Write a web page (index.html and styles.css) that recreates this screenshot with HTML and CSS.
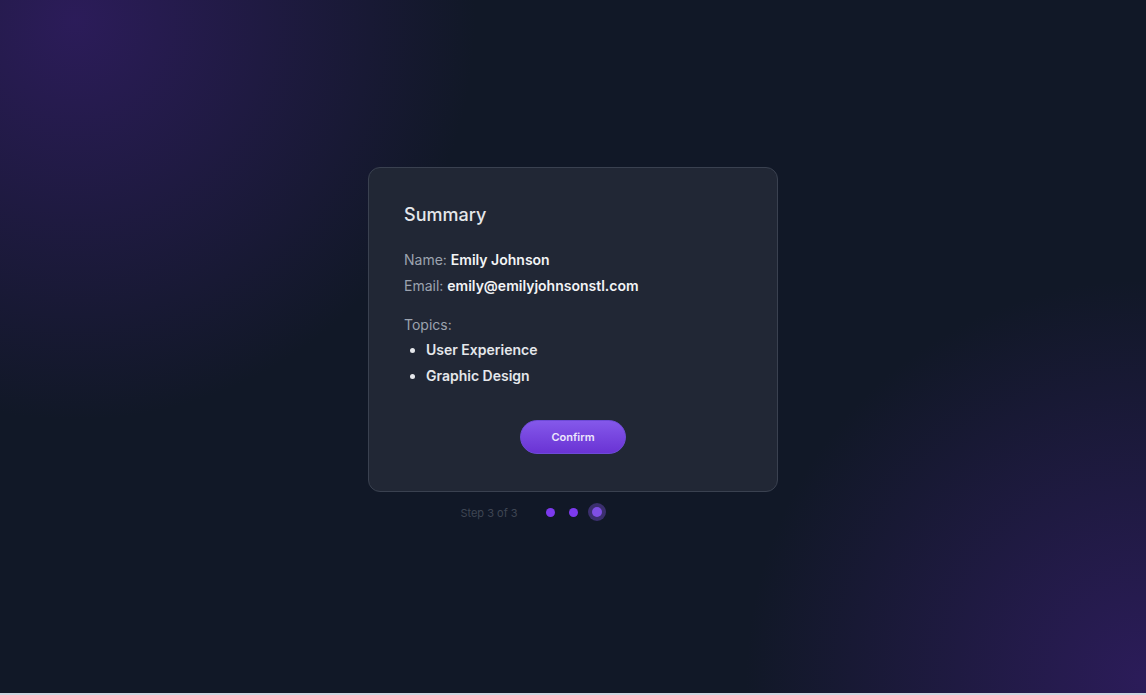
FILE: index.html
```html
<!DOCTYPE html>
<html lang="en">
<head>
<meta charset="utf-8">
<title>Summary</title>
<link rel="stylesheet" href="styles.css">
</head>
<body>
<main class="page">
  <div class="wizard">
    <section class="card">
      <h2 class="title">Summary</h2>
      <div class="fields">
        <p class="field"><span class="label">Name:</span> <strong>Emily Johnson</strong></p>
        <p class="field"><span class="label">Email:</span> <strong>emily@emilyjohnsonstl.com</strong></p>
      </div>
      <p class="label topics-label">Topics:</p>
      <ul class="topics">
        <li>User Experience</li>
        <li>Graphic Design</li>
      </ul>
      <div class="actions">
        <button class="confirm" type="button">Confirm</button>
      </div>
    </section>
    <div class="progress">
      <span class="step">Step 3 of 3</span>
      <div class="dots">
        <span class="dot"></span>
        <span class="dot"></span>
        <span class="dot active"></span>
      </div>
    </div>
  </div>
</main>
</body>
</html>
```
FILE: styles.css
```css
html {
  background: #cdd5e0;
}
body {
  margin: 0;
  font-family: Inter, "Noto Sans", sans-serif;
}
.page {
  height: 693px;
  background:
    radial-gradient(circle at 75px 20px, rgba(45, 28, 92, 0.95) 0, rgba(45, 28, 92, 0) 400px),
    radial-gradient(circle at 1146px 680px, rgba(45, 28, 92, 0.95) 0, rgba(45, 28, 92, 0) 400px),
    #111827;
  display: flex;
  justify-content: center;
  padding-top: 167px;
  box-sizing: border-box;
}
.wizard {
  width: 410px;
  display: flex;
  flex-direction: column;
  align-items: center;
}
.card {
  width: 100%;
  box-sizing: border-box;
  background: #212735;
  border: 1px solid #3a4150;
  border-radius: 12px;
  padding: 33px 35px 37px;
  color: #e5e7eb;
}
.title {
  margin: 0 0 18px;
  font-size: 18px;
  font-weight: 500;
  line-height: 28px;
  color: #e5e7eb;
}
.fields {
  display: flex;
  flex-direction: column;
}
.field {
  margin: 0;
  font-size: 14px;
  line-height: 25.5px;
}
.field strong {
  font-weight: 600;
  color: #f3f4f6;
}
.label {
  color: #9ca3af;
}
.topics-label {
  margin: 14px 0 0;
  font-size: 14px;
  line-height: 25px;
}
.topics {
  margin: 0;
  padding: 0 0 0 22px;
  font-size: 14px;
  line-height: 25.5px;
  font-weight: 600;
  color: #e5e7eb;
}
.actions {
  display: flex;
  justify-content: center;
  margin-top: 32px;
}
.confirm {
  width: 106px;
  height: 34px;
  border: 1px solid #6d4ad6;
  border-radius: 17px;
  background: linear-gradient(180deg, #8458ea 0%, #6a33d4 100%);
  color: #ece6fb;
  font-family: Inter, "Noto Sans", sans-serif;
  font-size: 11px;
  font-weight: 600;
}
.progress {
  display: flex;
  align-items: center;
  gap: 24px;
  margin-top: 11px;
  margin-right: 80px;
}
.step {
  font-size: 11px;
  color: #3f4654;
  padding-top: 2px;
}
.dots {
  display: flex;
  align-items: center;
  gap: 5px;
}
.dot {
  width: 18px;
  height: 18px;
  display: flex;
  align-items: center;
  justify-content: center;
  border-radius: 50%;
}
.dot::before {
  content: "";
  width: 9px;
  height: 9px;
  border-radius: 50%;
  background: #7c3aed;
}
.dot.active {
  background: #3b2f6e;
}
.dot.active::before {
  width: 10px;
  height: 10px;
  background: #7f4fe4;
}
```
